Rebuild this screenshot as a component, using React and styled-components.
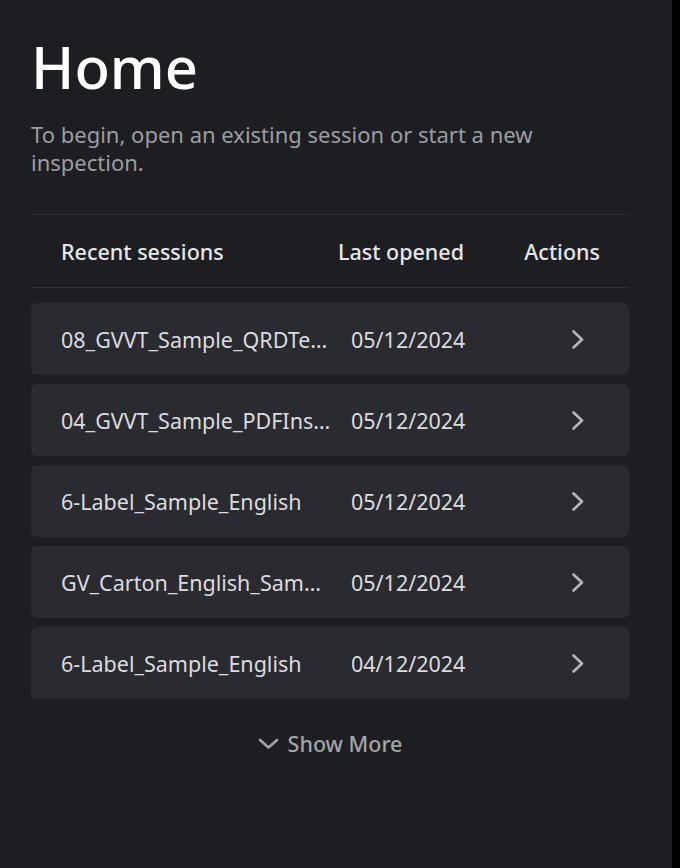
import styled, { createGlobalStyle } from "styled-components"

const sessions = [
  { name: "08_GVVT_Sample_QRDTest_English", date: "05/12/2024" },
  { name: "04_GVVT_Sample_PDFInspection", date: "05/12/2024" },
  { name: "6-Label_Sample_English", date: "05/12/2024" },
  { name: "GV_Carton_English_Sample", date: "05/12/2024" },
  { name: "6-Label_Sample_English", date: "04/12/2024" },
]

const ArrowRight = () => (
  <svg width="14" height="21" viewBox="0 0 14 21" fill="none">
    <path d="M2.5 2.5 L11 10.5 L2.5 18.5" stroke="currentColor" strokeWidth="2.6" strokeLinecap="round" strokeLinejoin="round" />
  </svg>
)

const ArrowDown = () => (
  <svg width="21" height="12" viewBox="0 0 21 12" fill="none">
    <path d="M2 2 L10.5 9.5 L19 2" stroke="currentColor" strokeWidth="2.6" strokeLinecap="round" strokeLinejoin="round" />
  </svg>
)

const App = () => {
  return (
    <>
      <GlobalStyle />
      <StPage>
        <StMain>
          <StTitle>Home</StTitle>
          <StIntro>To begin, open an existing session or start a new inspection.</StIntro>

          <StTableHead>
            <StHeadCell $width="277px">Recent sessions</StHeadCell>
            <StHeadCell $width="185px">Last opened</StHeadCell>
            <StHeadCell>Actions</StHeadCell>
          </StTableHead>

          <StList>
            {sessions.map((s, i) => (
              <StRow key={i}>
                <StName>{s.name}</StName>
                <StDate>{s.date}</StDate>
                <StAction aria-label="Open session">
                  <ArrowRight />
                </StAction>
              </StRow>
            ))}
          </StList>

          <StShowMore>
            <ArrowDown />
            Show More
          </StShowMore>
        </StMain>
        <StEdge />
      </StPage>
    </>
  )
}

const GlobalStyle = createGlobalStyle`
  html, body {
    margin: 0;
    padding: 0;
    background: #1d1e21;
  }
  body {
    font-family: "Noto Sans", "Open Sans", sans-serif;
  }
`

const StPage = styled.div`
  display: flex;
  min-height: 868px;
  background: #1d1e21;
`

const StMain = styled.main`
  flex: 1;
  padding: 31px 43px 0 31px;
`

const StEdge = styled.div`
  width: 8px;
  background: #000;
`

const StTitle = styled.h1`
  margin: 0;
  font-size: 58px;
  line-height: 72px;
  font-weight: 500;
  color: #ffffff;
`

const StIntro = styled.p`
  margin: 17px 0 0;
  font-size: 22px;
  line-height: 28px;
  color: #9c9da1;
`

const StTableHead = styled.div`
  display: flex;
  align-items: center;
  height: 72px;
  margin-top: 38px;
  padding: 0 29px 0 30px;
  border-top: 1px solid #2d2e32;
  border-bottom: 1px solid #2d2e32;
`

const StHeadCell = styled.div`
  width: ${(p) => p.$width || "auto"};
  flex: ${(p) => (p.$width ? "none" : "1")};
  text-align: ${(p) => (p.$width ? "left" : "right")};
  font-size: 21.5px;
  font-weight: 500;
  color: #e6e6e8;
`

const StList = styled.div`
  display: flex;
  flex-direction: column;
  gap: 9px;
  margin-top: 15px;
`

const StRow = styled.div`
  display: grid;
  grid-template-columns: 273px 1fr 14px;
  column-gap: 17px;
  align-items: center;
  height: 72px;
  padding: 0 44px 0 30px;
  border-radius: 6px;
  background: #2a2b30;
  font-size: 21.5px;
  color: #dcdcde;
`

const StName = styled.div`
  white-space: nowrap;
  overflow: hidden;
  text-overflow: ellipsis;
`

const StDate = styled.div``

const StAction = styled.button`
  display: flex;
  align-items: center;
  justify-content: center;
  padding: 0;
  border: 0;
  background: none;
  color: #b6b7ba;
  cursor: pointer;
`

const StShowMore = styled.button`
  display: flex;
  align-items: center;
  gap: 9px;
  margin: 30px auto 0;
  padding: 0;
  border: 0;
  background: none;
  font-family: inherit;
  font-size: 21.5px;
  font-weight: 500;
  color: #a3a4a7;
  cursor: pointer;
`

export default App
